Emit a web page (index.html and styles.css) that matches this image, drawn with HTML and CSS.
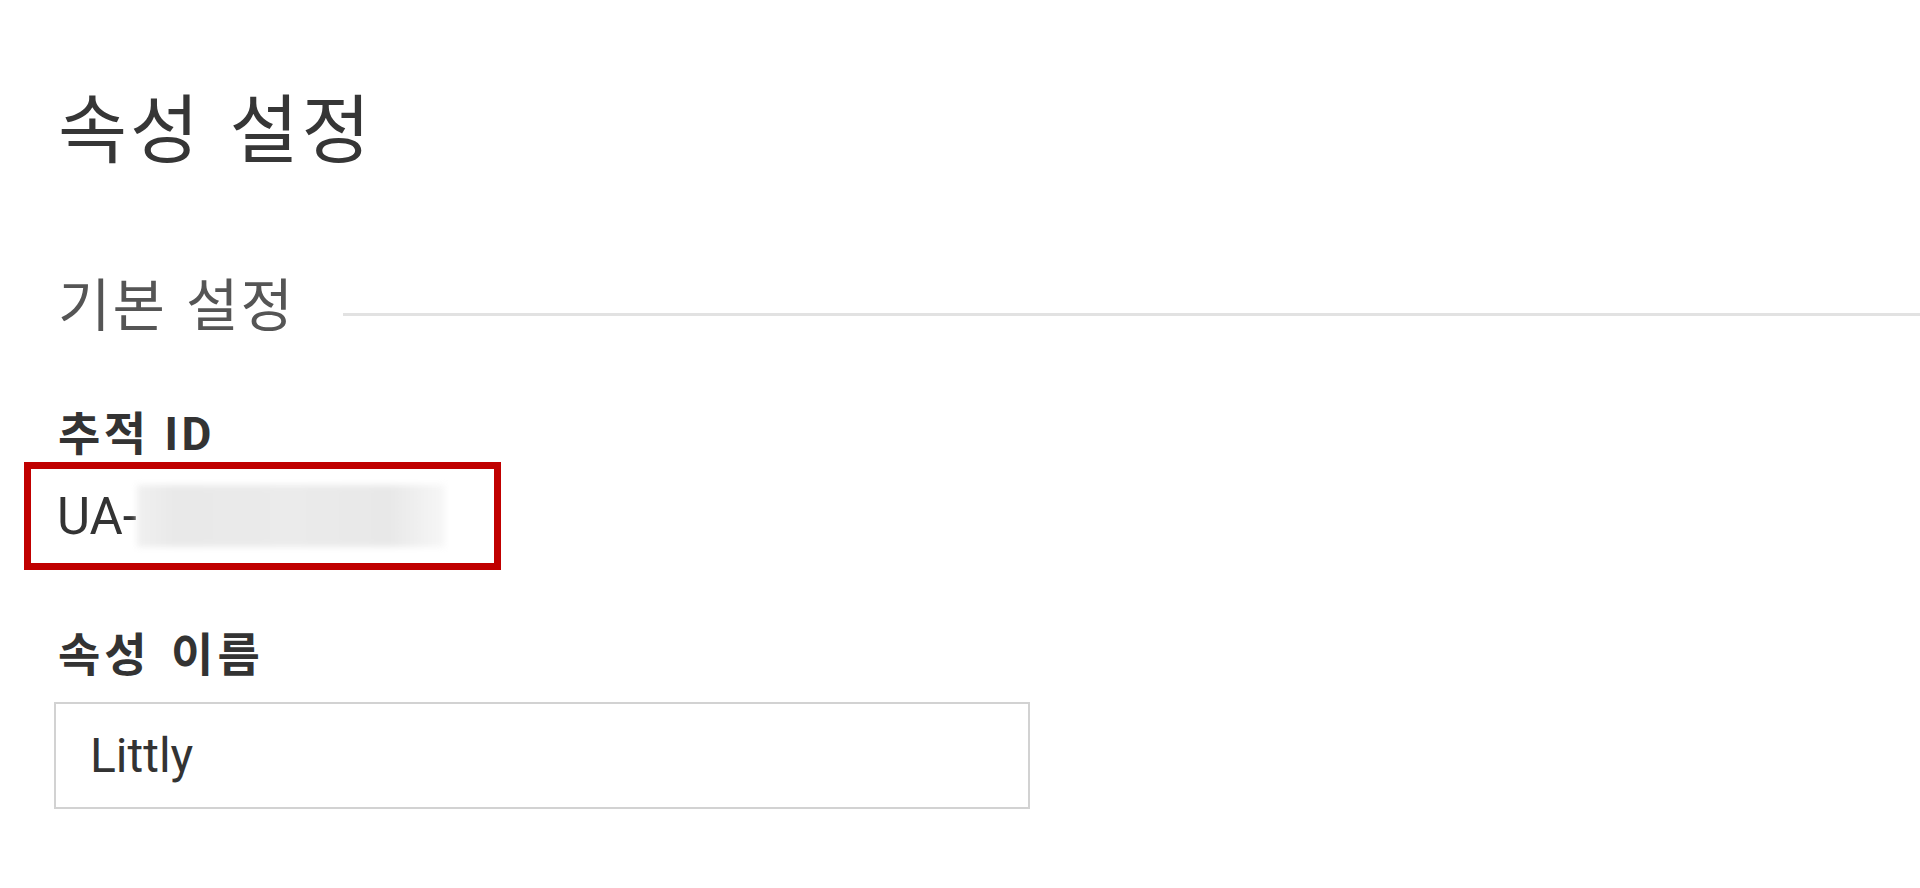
FILE: index.html
```html
<!DOCTYPE html>
<html lang="ko">
<head>
<meta charset="utf-8">
<title>속성 설정</title>
<link rel="stylesheet" href="styles.css">
</head>
<body>
<main class="page">
  <h1 class="title">속성 설정</h1>
  <div class="section">
    <h2 class="section-name">기본 설정</h2>
    <div class="section-rule"></div>
  </div>
  <div class="field">
    <div class="label">추적 ID</div>
    <div class="id-box">
      <span class="id-text">UA-</span><span class="id-blur"></span>
    </div>
  </div>
  <div class="field">
    <div class="label label-name">속성 이름</div>
    <div class="input">Littly</div>
  </div>
</main>
</body>
</html>
```

FILE: styles.css
```css
html, body {
  margin: 0;
  padding: 0;
  background: #ffffff;
}

body {
  font-family: Roboto, "Noto Sans CJK KR", "Noto Sans", sans-serif;
  color: #333333;
  overflow: hidden;
}

.page {
  padding: 81px 0 0 58px;
}

.title {
  margin: 0;
  font-size: 75px;
  line-height: 100px;
  font-weight: 400;
  letter-spacing: 3px;
  word-spacing: 6px;
  color: #363636;
}

.section {
  display: flex;
  align-items: center;
  gap: 48px;
  margin-top: 86px;
}

.section-name {
  margin: 0;
  font-size: 57px;
  line-height: 80px;
  font-weight: 400;
  letter-spacing: 2px;
  word-spacing: 3px;
  color: #555555;
  white-space: nowrap;
}

.section-rule {
  flex: 1;
  height: 3px;
  background: #e2e2e2;
  margin-top: 14px;
}

.field {
  display: flex;
  flex-direction: column;
}

.label {
  margin-top: 59px;
  font-size: 46px;
  line-height: 56px;
  font-weight: 700;
  letter-spacing: 3.5px;
  color: #333333;
}

.id-box {
  box-sizing: border-box;
  width: 477px;
  height: 108px;
  margin-left: -34px;
  border: 7px solid #c00000;
  padding-left: 26px;
  display: flex;
  align-items: center;
}

.id-text {
  font-size: 51px;
  color: #333333;
}

.id-blur {
  width: 308px;
  height: 62px;
  margin-left: 0;
  background: linear-gradient(90deg, #f0f0f0 0%, #e9e9e9 12%, #ebebeb 50%, #e8e8e8 82%, #f7f7f7 100%);
  filter: blur(3px);
}

.label-name {
  margin-top: 57px;
  letter-spacing: 4px;
  word-spacing: 5px;
}

.input {
  box-sizing: border-box;
  width: 976px;
  height: 107px;
  margin-top: 19px;
  margin-left: -4px;
  border: 2px solid #d2d2d2;
  padding-left: 34px;
  display: flex;
  align-items: center;
  font-size: 48px;
  color: #333333;
}
```
